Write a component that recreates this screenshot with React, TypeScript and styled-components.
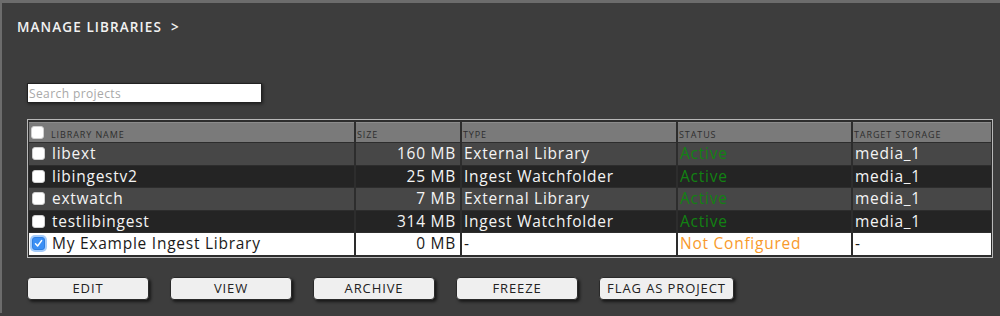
import React, { useState } from 'react';
import styled, { createGlobalStyle } from 'styled-components';

const GlobalStyle = createGlobalStyle`
  html, body {
    margin: 0;
    padding: 0;
    background: #3d3d3d;
  }
  body {
    font-family: 'Open Sans', 'Liberation Sans', sans-serif;
  }
`;

interface Library {
  name: string;
  size: string;
  type: string;
  status: 'Active' | 'Not Configured';
  target: string;
  checked?: boolean;
}

const libraries: Library[] = [
  { name: 'libext', size: '160 MB', type: 'External Library', status: 'Active', target: 'media_1' },
  { name: 'libingestv2', size: '25 MB', type: 'Ingest Watchfolder', status: 'Active', target: 'media_1' },
  { name: 'extwatch', size: '7 MB', type: 'External Library', status: 'Active', target: 'media_1' },
  { name: 'testlibingest', size: '314 MB', type: 'Ingest Watchfolder', status: 'Active', target: 'media_1' },
  { name: 'My Example Ingest Library', size: '0 MB', type: '-', status: 'Not Configured', target: '-', checked: true },
];

const actions = ['EDIT', 'VIEW', 'ARCHIVE', 'FREEZE', 'FLAG AS PROJECT'];

const Check = ({ checked }: { checked?: boolean }) => (
  <CheckBox checked={checked}>
    {checked && (
      <svg width="9" height="9" viewBox="0 0 9 9">
        <path d="M1.5 4.8 L3.6 7 L7.6 1.6" fill="none" stroke="#fff" strokeWidth="1.5" strokeLinecap="round" strokeLinejoin="round" />
      </svg>
    )}
  </CheckBox>
);

const App = () => {
  const [query, setQuery] = useState('');

  return (
    <>
      <GlobalStyle />
      <Page>
        <Title>
          <span>MANAGE LIBRARIES</span>
          <span>&gt;</span>
        </Title>
        <SearchInput placeholder="Search projects" value={query} onChange={(e) => setQuery(e.target.value)} />
        <TableFrame>
          <Table>
            <colgroup>
              <col style={{ width: 325 }} />
              <col style={{ width: 104 }} />
              <col style={{ width: 214 }} />
              <col style={{ width: 173 }} />
              <col style={{ width: 138 }} />
            </colgroup>
            <thead>
              <tr>
                <HeadCell>
                  <HeadName>
                    <Check />
                    <span>LIBRARY NAME</span>
                  </HeadName>
                </HeadCell>
                <HeadCell>SIZE</HeadCell>
                <HeadCell>TYPE</HeadCell>
                <HeadCell>STATUS</HeadCell>
                <HeadCell>TARGET STORAGE</HeadCell>
              </tr>
            </thead>
            <tbody>
              {libraries.map((lib, i) => (
                <Row key={lib.name} tone={lib.checked ? 'selected' : i % 2 === 0 ? 'light' : 'dark'}>
                  <Cell>
                    <NameWrap>
                      <Check checked={lib.checked} />
                      <span>{lib.name}</span>
                    </NameWrap>
                  </Cell>
                  <SizeCell>{lib.size}</SizeCell>
                  <Cell>{lib.type}</Cell>
                  <StatusCell status={lib.status}>{lib.status}</StatusCell>
                  <Cell>{lib.target}</Cell>
                </Row>
              ))}
            </tbody>
          </Table>
        </TableFrame>
        <Actions>
          {actions.map((a) => (
            <ActionButton key={a} wide={a !== 'FLAG AS PROJECT'}>
              {a}
            </ActionButton>
          ))}
        </Actions>
      </Page>
    </>
  );
};

export default App;

const Page = styled.div`
  height: 313px;
  border-top: 3px solid #6c6c6c;
  border-left: 2px solid #6c6c6c;
  background: #3d3d3d;
  padding: 0 0 0 15px;
  box-sizing: border-box;
  overflow: hidden;
`;

const Title = styled.div`
  display: flex;
  gap: 9px;
  padding-top: 15px;
  color: #f2f2f2;
  font-size: 13.5px;
  font-weight: 600;
  letter-spacing: 1.1px;
  height: 18px;
  line-height: 18px;
`;

const SearchInput = styled.input`
  display: block;
  margin: 47px 0 0 10px;
  width: 235px;
  height: 20px;
  box-sizing: border-box;
  border: 1px solid #222;
  background: #fff;
  padding: 0 1px;
  font-family: 'Open Sans', 'Liberation Sans', sans-serif;
  font-size: 12px;
  letter-spacing: 0.4px;
  box-shadow: 1px 1px 3px rgba(0, 0, 0, 0.5);
  outline: none;

  &::placeholder {
    color: #a8a8a8;
  }
`;

const TableFrame = styled.div`
  margin: 16px 0 0 10px;
  width: 966px;
  border: 1px solid #b8b8b8;
  box-sizing: border-box;
  background: #2d2d2d;
  padding: 1px;
`;

const Table = styled.table`
  table-layout: fixed;
  border-collapse: separate;
  border-spacing: 2px 1px;
  margin: 0 -2px;
  width: calc(100% + 4px);
`;

const HeadCell = styled.th`
  background: #7a7a7a;
  color: #2e2e2e;
  font-size: 9px;
  font-weight: 400;
  text-align: left;
  height: 19px;
  padding: 0 1px;
  vertical-align: bottom;
  line-height: 15px;
  letter-spacing: 0.9px;
  border-top: 1px solid #8c8c8c;
`;

const HeadName = styled.div`
  display: flex;
  align-items: flex-end;
  gap: 7px;
  padding-left: 1px;

  & > span:first-child {
    margin-bottom: 3px;
  }
`;

const Row = styled.tr<{ tone: 'light' | 'dark' | 'selected' }>`
  background: ${(p) => (p.tone === 'light' ? '#474747' : p.tone === 'dark' ? '#242424' : '#ffffff')};
  color: ${(p) => (p.tone === 'selected' ? '#1a1a1a' : '#f4f4f4')};
`;

const Cell = styled.td`
  height: 21.5px;
  padding: 0 2px;
  font-size: 15.5px;
  letter-spacing: 0.75px;
  line-height: 21px;
  white-space: nowrap;
  overflow: hidden;
  background: inherit;
`;

const SizeCell = styled(Cell)`
  text-align: right;
  padding-right: 4px;
`;

const StatusCell = styled(Cell)<{ status: string }>`
  color: ${(p) => (p.status === 'Active' ? '#128212' : '#f89a2c')};
`;

const NameWrap = styled.div`
  display: flex;
  align-items: center;
  gap: 7px;
  padding-left: 1px;
`;

const CheckBox = styled.span<{ checked?: boolean }>`
  display: inline-flex;
  align-items: center;
  justify-content: center;
  width: 13px;
  height: 13px;
  box-sizing: border-box;
  border-radius: 3px;
  flex-shrink: 0;
  background: ${(p) => (p.checked ? '#3b8ff5' : '#ffffff')};
  border: 1px solid ${(p) => (p.checked ? '#2f7ee0' : '#d0d0d0')};
  box-shadow: ${(p) => (p.checked ? '0 0 0 2px rgba(90, 160, 245, 0.55)' : 'none')};
`;

const Actions = styled.div`
  display: flex;
  gap: 21px;
  margin: 19px 0 0 10px;
`;

const ActionButton = styled.button<{ wide: boolean }>`
  width: ${(p) => (p.wide ? '122px' : '135px')};
  height: 23px;
  border: 1px solid #2a2a2a;
  border-radius: 4px;
  background: #efefef;
  color: #222;
  font-family: 'Open Sans', 'Liberation Sans', sans-serif;
  font-size: 13px;
  letter-spacing: 0.9px;
  box-shadow: 2px 2px 3px rgba(0, 0, 0, 0.6);
  padding: 0;
  cursor: pointer;
`;
